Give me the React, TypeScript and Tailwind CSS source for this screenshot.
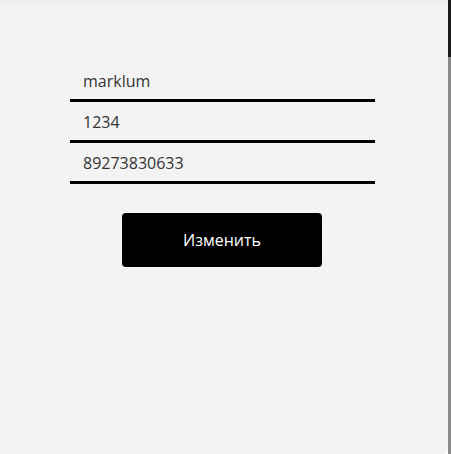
const fields = ["marklum", "1234", "89273830633"];

export default function App() {
  return (
    <div className="flex w-[451px] h-[454px] bg-white font-['Open_Sans',sans-serif]">
      <div className="flex-1 flex flex-col bg-[#f3f3f3] rounded-br-[6px]">
        <div className="h-[5px] bg-[#eef2ec]" />
        <div className="flex flex-col pt-[56px] pl-[70px]">
          <div className="flex flex-col w-[305px]">
            {fields.map((v) => (
              <input
                key={v}
                defaultValue={v}
                className="h-[41px] px-[13px] pt-[2px] bg-transparent border-b-[3px] border-black text-[16px] text-[#333] outline-none"
              />
            ))}
          </div>
          <button className="mt-[29px] ml-[52px] w-[200px] h-[54px] bg-black rounded-[4px] text-white text-[16px]">
            Изменить
          </button>
        </div>
      </div>
      <div className="w-[3px] flex flex-col">
        <div className="h-[57px] bg-[#1a1a1a]" />
        <div className="flex-1 bg-[#8a8a8a]" />
      </div>
    </div>
  );
}
